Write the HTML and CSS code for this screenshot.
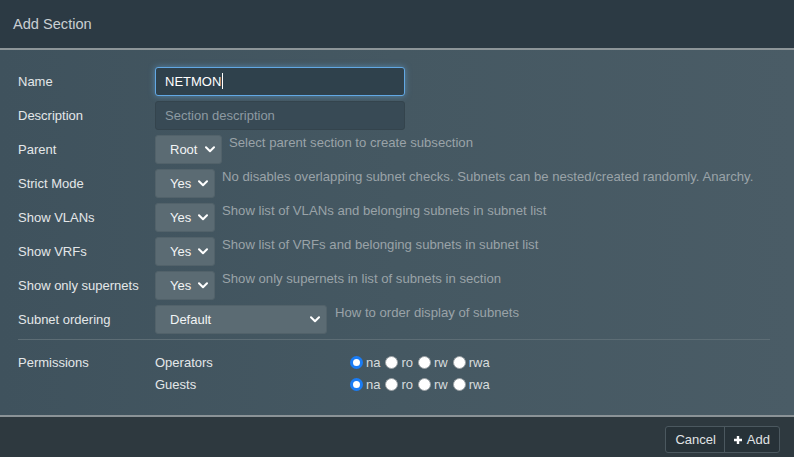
FILE: index.html
```html
<!DOCTYPE html>
<html>
<head>
<meta charset="utf-8">
<link rel="stylesheet" href="styles.css">
</head>
<body>
<div class="modal">
  <div class="modal-header">Add Section</div>
  <div class="modal-body">
    <div class="row">
      <div class="label">Name</div>
      <div class="input focused">NETMON<span class="caret"></span></div>
    </div>
    <div class="row">
      <div class="label">Description</div>
      <div class="input placeholder">Section description</div>
    </div>
    <div class="row">
      <div class="label">Parent</div>
      <div class="select w-root"><span>Root</span><svg class="chev" viewBox="0 0 10 7" width="10" height="7"><path d="M1 1.2 L5 5.2 L9 1.2" fill="none" stroke="#fff" stroke-width="2" stroke-linecap="round" stroke-linejoin="round"/></svg></div>
      <div class="help">Select parent section to create subsection</div>
    </div>
    <div class="row">
      <div class="label">Strict Mode</div>
      <div class="select w-yes"><span>Yes</span><svg class="chev" viewBox="0 0 10 7" width="10" height="7"><path d="M1 1.2 L5 5.2 L9 1.2" fill="none" stroke="#fff" stroke-width="2" stroke-linecap="round" stroke-linejoin="round"/></svg></div>
      <div class="help">No disables overlapping subnet checks. Subnets can be nested/created randomly. Anarchy.</div>
    </div>
    <div class="row">
      <div class="label">Show VLANs</div>
      <div class="select w-yes"><span>Yes</span><svg class="chev" viewBox="0 0 10 7" width="10" height="7"><path d="M1 1.2 L5 5.2 L9 1.2" fill="none" stroke="#fff" stroke-width="2" stroke-linecap="round" stroke-linejoin="round"/></svg></div>
      <div class="help">Show list of VLANs and belonging subnets in subnet list</div>
    </div>
    <div class="row">
      <div class="label">Show VRFs</div>
      <div class="select w-yes"><span>Yes</span><svg class="chev" viewBox="0 0 10 7" width="10" height="7"><path d="M1 1.2 L5 5.2 L9 1.2" fill="none" stroke="#fff" stroke-width="2" stroke-linecap="round" stroke-linejoin="round"/></svg></div>
      <div class="help">Show list of VRFs and belonging subnets in subnet list</div>
    </div>
    <div class="row">
      <div class="label">Show only supernets</div>
      <div class="select w-yes"><span>Yes</span><svg class="chev" viewBox="0 0 10 7" width="10" height="7"><path d="M1 1.2 L5 5.2 L9 1.2" fill="none" stroke="#fff" stroke-width="2" stroke-linecap="round" stroke-linejoin="round"/></svg></div>
      <div class="help">Show only supernets in list of subnets in section</div>
    </div>
    <div class="row">
      <div class="label">Subnet ordering</div>
      <div class="select w-default"><span>Default</span><svg class="chev" viewBox="0 0 10 7" width="10" height="7"><path d="M1 1.2 L5 5.2 L9 1.2" fill="none" stroke="#fff" stroke-width="2" stroke-linecap="round" stroke-linejoin="round"/></svg></div>
      <div class="help help-wide">How to order display of subnets</div>
    </div>
    <div class="separator"></div>
    <div class="perm">
      <div class="label perm-label">Permissions</div>
      <div class="perm-groups">
        <div class="perm-row">
          <div class="group">Operators</div>
          <div class="radios">
            <span class="radio checked"></span><span class="rl">na</span>
            <span class="radio"></span><span class="rl">ro</span>
            <span class="radio"></span><span class="rl">rw</span>
            <span class="radio"></span><span class="rl">rwa</span>
          </div>
        </div>
        <div class="perm-row">
          <div class="group">Guests</div>
          <div class="radios">
            <span class="radio checked"></span><span class="rl">na</span>
            <span class="radio"></span><span class="rl">ro</span>
            <span class="radio"></span><span class="rl">rw</span>
            <span class="radio"></span><span class="rl">rwa</span>
          </div>
        </div>
      </div>
    </div>
  </div>
  <div class="modal-footer">
    <div class="btn-group">
      <div class="btn">Cancel</div>
      <div class="btn"><svg class="plus" viewBox="0 0 10 10" width="10" height="10"><path d="M5 1 V9 M1 5 H9" stroke="#fff" stroke-width="2.4"/></svg>Add</div>
    </div>
  </div>
</div>
</body>
</html>
```

FILE: styles.css
```css
html, body {
  margin: 0;
  padding: 0;
}
body {
  width: 794px;
  height: 457px;
  overflow: hidden;
  font-family: "Liberation Sans", Arial, sans-serif;
  font-size: 13px;
  background: #2e393f;
}
.modal {
  display: flex;
  flex-direction: column;
  height: 457px;
}
.modal-header {
  box-sizing: border-box;
  height: 50px;
  padding: 16px 13px 0;
  font-size: 14.6px;
  color: #c9cfd3;
  background: #2c3a44;
  border-bottom: 2px solid #8d9599;
}
.modal-body {
  flex: 1;
  padding: 17px 24px 0 18px;
  background: linear-gradient(90deg, #3f525d 0%, #455862 50%, #4a5c66 100%);
  border-bottom: 2px solid #8b9397;
}
.row {
  display: flex;
  align-items: flex-start;
  height: 29px;
  margin-bottom: 5px;
}
.label {
  width: 137px;
  flex: none;
  color: #e4e7e9;
  line-height: 29px;
}
.input {
  width: 250px;
  height: 29px;
  box-sizing: border-box;
  border-radius: 3px;
  padding: 0 9px;
  line-height: 27px;
  color: #ffffff;
  background: #334550;
  border: 1px solid #3a4a53;
}
.input.focused {
  border: 1px solid #62a8e4;
  box-shadow: 0 0 6px rgba(102, 175, 233, 0.55);
  background: #2f414c;
}
.caret {
  display: inline-block;
  width: 1px;
  height: 16px;
  background: #ffffff;
  vertical-align: -3px;
  margin-left: 1px;
}
.input.placeholder {
  color: #8d9aa2;
  background: #384a55;
  border-color: #34444d;
}
.select {
  height: 29px;
  box-sizing: border-box;
  border-radius: 3px;
  background: #5b6b73;
  border: 1px solid #52626a;
  color: #f2f4f5;
  display: flex;
  align-items: center;
  justify-content: space-between;
  padding: 0 6px 0 14px;
  flex: none;
}
.w-root { width: 67px; }
.w-yes { width: 60px; }
.w-default { width: 172px; }
.chev {
  flex: none;
}
.help {
  margin-left: 7px;
  line-height: 16px;
  font-size: 13.15px;
  color: #9aa3a8;
  white-space: nowrap;
}
.help-wide {
  margin-left: 8px;
}
.separator {
  height: 1px;
  background: #5d6d75;
  margin: 5px 0 0 0;
  width: 752px;
}
.perm {
  display: flex;
  padding-top: 14px;
}
.perm-label {
  line-height: 18px;
}
.perm-groups {
  display: flex;
  flex-direction: column;
  gap: 6px;
}
.perm-row {
  display: flex;
  align-items: center;
  height: 16px;
  color: #e4e7e9;
}
.group {
  width: 195px;
}
.radios {
  display: flex;
  align-items: center;
}
.radio {
  width: 13px;
  height: 13px;
  box-sizing: border-box;
  border-radius: 50%;
  background: #ffffff;
  border: 1px solid #9aa0a4;
  margin-right: 3px;
}
.radio.checked {
  border: 3px solid #1a7cf5;
}
.rl {
  color: #d8dcde;
  margin-right: 5px;
}
.modal-footer {
  height: 40px;
  box-sizing: border-box;
  background: #2e393f;
  display: flex;
  justify-content: flex-end;
  padding: 9px 14px 0 0;
}
.btn-group {
  display: flex;
  height: 27px;
  border: 1px solid #4b585f;
  border-radius: 3px;
  box-sizing: border-box;
  background: #273238;
}
.btn {
  color: #e0e3e5;
  line-height: 25px;
  padding: 0 8px 0 9px;
  display: flex;
  align-items: center;
  gap: 3px;
}
.btn + .btn {
  border-left: 1px solid #4b585f;
  padding: 0 9px 0 8px;
}
.plus {
  margin-right: 1px;
}
```
